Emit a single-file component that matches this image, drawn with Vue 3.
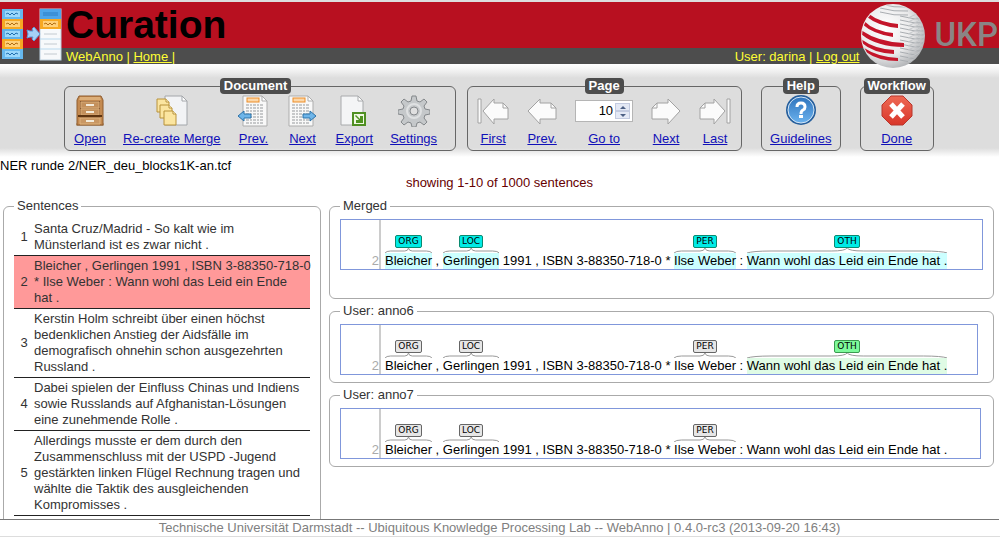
<script setup>
import { ref } from 'vue'

const page = ref(10)

const groups = [
  {
    title: 'Document',
    kind: 'document',
    items: [
      { label: 'Open', icon: 'open' },
      { label: 'Re-create Merge', icon: 'merge' },
      { label: 'Prev.', icon: 'docprev' },
      { label: 'Next', icon: 'docnext' },
      { label: 'Export', icon: 'export' },
      { label: 'Settings', icon: 'settings' },
    ],
  },
  {
    title: 'Page',
    kind: 'page',
    items: [
      { label: 'First', icon: 'first' },
      { label: 'Prev.', icon: 'prev' },
      { label: 'Go to', icon: 'goto' },
      { label: 'Next', icon: 'next' },
      { label: 'Last', icon: 'last' },
    ],
  },
  { title: 'Help', kind: 'help', items: [{ label: 'Guidelines', icon: 'help' }] },
  { title: 'Workflow', kind: 'workflow', items: [{ label: 'Done', icon: 'done' }] },
]

const sentences = [
  { n: 1, text: 'Santa Cruz/Madrid - So kalt wie im\nMünsterland ist es zwar nicht .' },
  { n: 2, text: 'Bleicher , Gerlingen 1991 , ISBN 3-88350-718-0\n* Ilse Weber : Wann wohl das Leid ein Ende\nhat .', active: true },
  { n: 3, text: 'Kerstin Holm schreibt über einen höchst\nbedenklichen Anstieg der Aidsfälle im\ndemografisch ohnehin schon ausgezehrten\nRussland .' },
  { n: 4, text: 'Dabei spielen der Einfluss Chinas und Indiens\nsowie Russlands auf Afghanistan-Lösungen\neine zunehmende Rolle .' },
  { n: 5, text: 'Allerdings musste er dem durch den\nZusammenschluss mit der USPD -Jugend\ngestärkten linken Flügel Rechnung tragen und\nwählte die Taktik des ausgleichenden\nKompromisses .' },
]

const line = (main, last) => [
  { text: 'Bleicher', tag: 'ORG', tone: main },
  { text: ' , ' },
  { text: 'Gerlingen', tag: 'LOC', tone: main },
  { text: ' 1991 , ISBN 3-88350-718-0 * ' },
  { text: 'Ilse Weber', tag: 'PER', tone: main },
  { text: ' : ' },
  last
    ? { text: 'Wann wohl das Leid ein Ende hat .', tag: 'OTH', tone: last }
    : { text: 'Wann wohl das Leid ein Ende hat .' },
]

const views = [
  { title: 'Merged', kind: 'merged', parts: line('cyan', 'cyan') },
  { title: 'User: anno6', kind: 'anno6', parts: line('grey', 'green') },
  { title: 'User: anno7', kind: 'anno7', parts: line('grey', null) },
]
</script>

<template>
  <div class="app">
    <header class="top">
      <svg class="mark" width="62" height="54" viewBox="0 0 62 54" aria-hidden="true">
        <g v-for="(c, i) in ['#66b8ee', '#f7a823', '#5fb0e8', '#f7a823', '#66b8ee']" :key="i">
          <rect x="2" :y="1 + i * 10" width="21" height="10" :fill="c" />
          <rect x="5" :y="3 + i * 10" width="15" height="6" :fill="i % 2 ? '#ffd079' : '#9bd8fb'" />
          <path :d="`M6 ${6 + i * 10}l2 -1 2 2 2 -2 2 2 2 -2 2 1`" fill="none" :stroke="i % 2 ? '#b26d12' : '#1f6fb0'" />
        </g>
        <rect x="40" y="1" width="21" height="51" fill="#f7f9fb" stroke="#bcd0df" />
        <rect x="40" y="1" width="21" height="10" fill="#4ea5ea" />
        <path d="M43 5h15M43 7h15" stroke="#2a7cc4" />
        <rect x="40" y="11" width="21" height="10" fill="#f7a823" />
        <rect x="43" y="13" width="15" height="6" fill="#ffd079" />
        <path d="M44 16l2 -1 2 2 2 -2 2 2 2 -2 2 1" fill="none" stroke="#b26d12" />
        <path d="M40 31h21M40 41h21" stroke="#b9d9ee" />
        <path d="M44 26h13M44 36h13M44 46h13" stroke="#c3cad0" />
        <path d="M27 22l3 1h3l-1-2 2-2 6 7-6 7-2-2 1-2h-3l-3 1 1-4z" fill="#a5d0f8" stroke="#5b9ad8" />
      </svg>
      <h1>Curation</h1>
      <nav class="left-nav">WebAnno | <a href="#">Home&nbsp;</a>|</nav>
      <div class="user">User: darina | <a href="#">Log out</a></div>
      <div class="logo">
        <svg width="66" height="64" viewBox="0 0 66 64" aria-hidden="true">
          <defs>
            <radialGradient id="ball" cx="38%" cy="38%" r="65%">
              <stop offset="0" stop-color="#ffffff" />
              <stop offset="0.65" stop-color="#e9e9ea" />
              <stop offset="1" stop-color="#b4b6b9" />
            </radialGradient>
            <clipPath id="ballclip"><circle cx="33" cy="32" r="31" /></clipPath>
          </defs>
          <circle cx="33" cy="32" r="32" fill="url(#ball)" />
          <g clip-path="url(#ballclip)" fill="none">
            <path v-for="k in 15" :key="k" :d="`M${k < 4 ? 20 : 40} ${-4 + k * 4}q14 4 28 3`" stroke="#a9adb1" />
            <path v-for="k in 12" :key="'b' + k" :d="`M48 ${10 + k * 4}q10 -3 18 -12`" stroke="#c3c6c9" />
          </g>
          <g clip-path="url(#ballclip)" fill="#c4152a">
            <path d="M9 10Q19 18 38 20V24Q18 22 7 13z" />
            <path d="M4 17Q14 27 33 29V33Q13 30 2 20z" />
            <path d="M1 26Q18 38 44 39V43Q16 43 1 30z" />
            <path d="M1 35Q14 45 34 46V50Q13 49 2 39z" />
            <path d="M4 44Q18 53 38 54V57Q18 57 6 48z" />
          </g>
        </svg>
        <span class="ukp">UKP</span>
      </div>
    </header>

    <div class="toolbar">
      <fieldset v-for="g in groups" :key="g.title" class="group" :class="g.kind">
        <legend>{{ g.title }}</legend>
        <div class="items">
          <template v-for="it in g.items" :key="it.label">
            <div v-if="it.icon === 'goto'" class="tool">
              <span class="spin">
                <input id="page-number" v-model="page" type="text" />
                <span class="arrows">
                  <button type="button" aria-label="Increase" @click="page++"><svg width="6" height="3" viewBox="0 0 6 3"><path d="M0 3L3 0 6 3z" fill="#4d6185" /></svg></button>
                  <button type="button" aria-label="Decrease" @click="page--"><svg width="6" height="3" viewBox="0 0 6 3"><path d="M0 0L3 3 6 0z" fill="#4d6185" /></svg></button>
                </span>
              </span>
              <label for="page-number"><a href="#">{{ it.label }}</a></label>
            </div>
            <a v-else class="tool" href="#">
              <svg width="32" height="32" viewBox="0 0 32 32" aria-hidden="true">
                <g v-if="it.icon === 'open'">
                  <rect x="2" y="28" width="28" height="3" rx="1" fill="#b9a58e" />
                  <path d="M5 1h22l2 4v25H3V5z" fill="#c48a50" stroke="#8f5c2e" />
                  <path d="M6 2h20l1 3H5z" fill="#dcae78" />
                  <path d="M6 6h20v22H6z" fill="#8a5a30" />
                  <path d="M7 7h18v6H7zM7 14h18v6H7z" fill="#c3905c" stroke="#d9ab77" />
                  <path d="M4 20h24v2H4z" fill="#5d3512" />
                  <path d="M6 23h20v6H6z" fill="#c99763" stroke="#dfb37f" />
                  <rect x="12" y="9" width="8" height="2" fill="#f3ead9" />
                  <rect x="12" y="16" width="8" height="2" fill="#f3ead9" />
                  <rect x="12" y="25" width="8" height="2" fill="#f3ead9" />
                </g>
                <g v-else-if="it.icon === 'merge'">
                  <path d="M9 1h17l5 5v24H9z" fill="#f2f3f5" stroke="#a3a6aa" />
                  <path d="M26 1v5h5z" fill="#fff" stroke="#a3a6aa" />
                  <g fill="#fbe5a0" stroke="#b8923a">
                    <path d="M1 4h9l3 3v10H1z" />
                    <path d="M4 10h9l3 3v10H4z" />
                    <path d="M8 16h9l3 3v11H8z" />
                  </g>
                  <path d="M10 4v3h3M13 10v3h3M17 16v3h3" fill="#fff6d4" stroke="#b8923a" />
                </g>
                <g v-else-if="it.icon === 'docprev' || it.icon === 'docnext'">
                  <g :transform="it.icon === 'docprev' ? 'translate(3 0)' : ''">
                    <path d="M2 1h19l5 5v25H2z" fill="#f8f8f8" stroke="#adadad" />
                    <path d="M21 1v5h5z" fill="#fff" stroke="#adadad" />
                    <rect x="6" y="3" width="12" height="4" fill="#fcd7a8" stroke="#ec8d29" />
                    <path d="M5 10h18M5 13h18M5 16h18M5 19h18M5 22h18M5 25h18M5 28h18" stroke="#96999c" stroke-dasharray="3 1 2 1" />
                  </g>
                  <path v-if="it.icon === 'docprev'" d="M0 21l6-5v3h7v4H6v3z" fill="#6eb5e9" stroke="#2d72a8" />
                  <path v-else d="M29 21l-6-5v3h-7v4h7v3z" fill="#6eb5e9" stroke="#2d72a8" />
                </g>
                <g v-else-if="it.icon === 'export'">
                  <path d="M3 1h17l5 5v24H3z" fill="#f4f5f6" stroke="#a8aaac" />
                  <path d="M20 1v5h5z" fill="#fff" stroke="#a8aaac" />
                  <rect x="15" y="18" width="12" height="12" fill="#f1f8e4" stroke="#4f8f22" stroke-width="2" />
                  <path d="M18 20l4 4V21h3v7h-7v-3h3l-4-4z" fill="#4f9320" />
                </g>
                <g v-else-if="it.icon === 'settings'">
                  <path d="M14 1h4l1 5 3 1 4-3 3 3-3 4 1 3 5 1v4l-5 1-1 3 3 4-3 3-4-3-3 1-1 4h-4l-1-4-3-1-4 3-3-3 3-4-1-3-5-1v-4l5-1 1-3-3-4 3-3 4 3 3-1z" fill="#c5c8ca" stroke="#84888b" stroke-linejoin="round" />
                  <circle cx="16" cy="16" r="7" fill="none" stroke="#dfe1e2" stroke-width="2" />
                  <circle cx="16" cy="16" r="4" fill="#e0e0e0" stroke="#84888b" />
                </g>
                <g v-else stroke-linejoin="round">
                  <g v-if="it.icon === 'first'" stroke="#a2a2a2" fill="#fbfbfb">
                    <rect x="1" y="4" width="3" height="24" />
                    <path d="M6 16L17 4v4h9l5 5v11H17v5z" />
                    <path d="M26 8v5h5z" />
                  </g>
                  <g v-else-if="it.icon === 'prev'" stroke="#a2a2a2" fill="#fbfbfb">
                    <path d="M2 16L14 4v4h11l5 5v11H14v5z" />
                    <path d="M25 8v5h5z" />
                  </g>
                  <g v-else-if="it.icon === 'next'" stroke="#a2a2a2" fill="#fbfbfb">
                    <path d="M30 16L18 4v4H7l-5 5v11h16v5z" />
                    <path d="M7 8v5H2z" />
                  </g>
                  <g v-else-if="it.icon === 'last'" stroke="#a2a2a2" fill="#fbfbfb">
                    <rect x="28" y="4" width="3" height="24" />
                    <path d="M26 16L15 4v4H6l-5 5v11h14v5z" />
                    <path d="M6 8v5H1z" />
                  </g>
                  <g v-else-if="it.icon === 'help'">
                    <defs>
                      <linearGradient id="blue" x1="0" y1="0" x2="0" y2="1">
                        <stop offset="0" stop-color="#2f74bd" />
                        <stop offset="1" stop-color="#6bb2ee" />
                      </linearGradient>
                    </defs>
                    <circle cx="16" cy="15" r="15" fill="#255e9c" />
                    <circle cx="16" cy="15" r="13" fill="url(#blue)" stroke="#d5e7f7" />
                    <path d="M12 12q0-4 4-4t4 4q0 2-2 3t-2 4" fill="none" stroke="#fff" stroke-width="3" />
                    <rect x="14" y="20" width="4" height="3" fill="#fff" />
                  </g>
                  <g v-else>
                    <defs>
                      <linearGradient id="red" x1="0" y1="0" x2="0" y2="1">
                        <stop offset="0" stop-color="#ee6a55" />
                        <stop offset="1" stop-color="#d9362a" />
                      </linearGradient>
                    </defs>
                    <path d="M10 1h12l9 9v11l-9 9H10l-9-9V10z" fill="url(#red)" stroke="#b8362d" />
                    <path d="M10 9l12 13M22 9L10 22" stroke="#fff" stroke-width="5" />
                  </g>
                </g>
              </svg>
              <span>{{ it.label }}</span>
            </a>
          </template>
        </div>
      </fieldset>
    </div>

    <main>
      <div class="path">NER runde 2/NER_deu_blocks1K-an.tcf</div>
      <div class="showing">showing 1-10 of 1000 sentences</div>
      <div class="columns">
        <fieldset class="panel sentences">
          <legend>Sentences</legend>
          <table>
            <tbody>
              <tr v-for="s in sentences" :key="s.n" :class="{ active: s.active }">
                <td class="num">{{ s.n }}</td>
                <td class="sentence">{{ s.text }}</td>
              </tr>
            </tbody>
          </table>
        </fieldset>
        <div class="views">
          <fieldset v-for="v in views" :key="v.title" class="panel" :class="v.kind">
            <legend>{{ v.title }}</legend>
            <div class="brat">
              <div class="gutter">2</div>
              <div class="line">
                <template v-for="(p, i) in v.parts" :key="i">
                  <span v-if="p.tag" class="anno" :class="p.tone">
                    <span class="tag">{{ p.tag }}</span>
                    <svg class="brace" viewBox="0 0 100 5" preserveAspectRatio="none" aria-hidden="true">
                      <path d="M0 5Q3 3 12 3H42Q49 3 50 0Q51 3 58 3H88Q97 3 100 5" fill="none" stroke="#999" vector-effect="non-scaling-stroke" />
                    </svg>
                    <span class="word">{{ p.text }}</span>
                  </span>
                  <span v-else class="plain">{{ p.text }}</span>
                </template>
              </div>
            </div>
          </fieldset>
        </div>
      </div>
    </main>

    <footer>Technische Universität Darmstadt -- Ubiquitous Knowledge Processing Lab -- WebAnno | 0.4.0-rc3 (2013-09-20 16:43)</footer>
  </div>
</template>

<style>
body {
  margin: 0;
  background: #fff;
}
</style>

<style scoped>
.app {
  box-sizing: border-box;
  display: flex;
  flex-direction: column;
  height: 100vh;
  overflow: hidden;
  padding-right: 1px;
  border-bottom: 1px solid #ddd;
  font: 13px/16px "Liberation Sans", Arial, sans-serif;
  color: #000;
}
.top {
  position: relative;
  z-index: 1;
  flex: none;
  display: grid;
  grid-template-columns: 66px 1fr auto auto;
  grid-template-rows: 46px 16px;
  border-top: 2px solid #ddd;
  background: linear-gradient(#b81020 46px, #4d4d4d 46px);
  color: #ff3;
}
.top a {
  color: inherit;
}
.mark {
  grid-row: 1 / 3;
  margin-top: 6px;
}
h1 {
  grid-column: 2 / 4;
  margin: 0;
  font-size: 39px;
  line-height: 46px;
  color: #000;
}
.left-nav {
  grid-column: 2;
  grid-row: 2;
  line-height: 17px;
}
.user {
  grid-column: 3;
  grid-row: 2;
  line-height: 17px;
}
.logo {
  grid-column: 4;
  grid-row: 1 / 3;
  display: flex;
  gap: 8px;
  height: 62px;
  padding: 2px 1px 0 1px;
  box-sizing: border-box;
}
.logo svg {
  flex: none;
}
.ukp {
  font: 500 33px/62px Roboto, "Liberation Sans", sans-serif;
  color: #8a8585;
}
.toolbar {
  flex: none;
  display: flex;
  gap: 11px;
  padding: 14px 64px 7px;
  background: linear-gradient(#fff 0, #f6f6f6 5px, #ddd 14px, #ddd 84px, #fff 93px);
}
.group {
  margin: 0;
  padding: 1px 9px 4px;
  border: 1px solid #666;
  border-radius: 6px;
  min-width: 0;
}
.group.document {
  padding-right: 18px;
}
.group.page {
  padding-right: 10px;
}
.group.help,
.group.workflow {
  margin-left: 8px;
  padding-left: 8px;
  padding-right: 8px;
}
.group.workflow {
  padding-left: 3px;
  padding-right: 3px;
}
.group legend {
  margin: 0 auto;
  padding: 0 4px;
  border-radius: 4px;
  background: #4d4d4d;
  color: #fff;
  font-weight: bold;
  line-height: 16px;
}
.items {
  display: flex;
  justify-content: center;
  gap: 17px;
}
.tool,
.tool a {
  color: #1010b8;
}
.tool {
  display: flex;
  flex-direction: column;
  align-items: center;
  gap: 4px;
  min-width: 32px;
  white-space: nowrap;
}
.group {
  padding-bottom: 3px;
}
.spin {
  display: flex;
  align-items: center;
  box-sizing: border-box;
  width: 58px;
  height: 22px;
  margin: 5px 0;
  padding-right: 2px;
  border: 1px solid #b5b5b5;
  background: #fff;
}
.spin input {
  flex: 1;
  min-width: 0;
  padding: 0 2px 0 0;
  border: 0;
  outline: 0;
  background: transparent;
  font: inherit;
  text-align: right;
}
.arrows {
  display: flex;
  flex-direction: column;
  width: 15px;
}
.arrows button {
  display: flex;
  align-items: center;
  justify-content: center;
  height: 8px;
  padding: 0;
  border: 1px solid #c3cbe0;
  background: #e4e9f5;
}
main {
  flex: 1;
  min-height: 0;
  overflow: hidden;
}
.showing {
  padding-top: 1px;
  text-align: center;
  color: #600;
}
.columns {
  display: grid;
  grid-template-columns: 318px 1fr;
  gap: 8px;
  padding: 7px 5px 0 3px;
  align-items: start;
}
.panel {
  margin: 0;
  min-width: 0;
  border: 1px solid #aaa;
  border-radius: 6px;
  color: #333;
}
.panel legend {
  padding: 0 3px;
}
.sentences {
  height: 400px;
  padding: 5px 10px 0;
}
table {
  width: 100%;
  border-collapse: collapse;
  table-layout: fixed;
}
td {
  padding: 2px 0;
  border-bottom: 1px solid #222;
}
.sentence {
  white-space: pre;
}
.active {
  background: #f99;
}
.num {
  width: 20px;
  text-align: center;
}
.views {
  display: flex;
  flex-direction: column;
  gap: 4px;
}
.views .panel {
  padding: 5px 10px 7px;
}
.views .merged {
  padding-bottom: 28px;
}
.views .anno6 {
  padding-right: 15px;
}
.views .anno7 {
  padding-right: 12px;
}
.brat {
  display: flex;
  align-items: stretch;
  box-sizing: border-box;
  height: 51px;
  border: 1px solid #8097db;
  color: #000;
}
.gutter {
  display: flex;
  align-items: flex-end;
  justify-content: flex-end;
  flex: none;
  width: 38px;
  border-right: 2px solid #ccc;
  color: #aaa;
}
.line {
  display: flex;
  align-items: flex-end;
  padding-left: 4px;
  white-space: pre;
}
.anno {
  display: flex;
  flex-direction: column;
  align-items: center;
}
.tag {
  padding: 0 2px;
  border: 1px solid #666;
  border-radius: 2px;
  font: 9px/11px "DejaVu Sans", Verdana, sans-serif;
}
.brace {
  display: block;
  width: 0;
  min-width: 100%;
  height: 5px;
}
.grey .tag {
  background: #e6e6e6;
}
.cyan .tag {
  background: #00ebe6;
  border-color: #0a8a70;
}
.green .tag {
  background: #7dfa9b;
  border-color: #3a9a50;
}
.cyan .word {
  background: #cff;
}
.green .word {
  background: #dffbe5;
}
footer {
  flex: none;
  border-top: 1px solid #777;
  text-align: center;
  color: #808080;
}
</style>
